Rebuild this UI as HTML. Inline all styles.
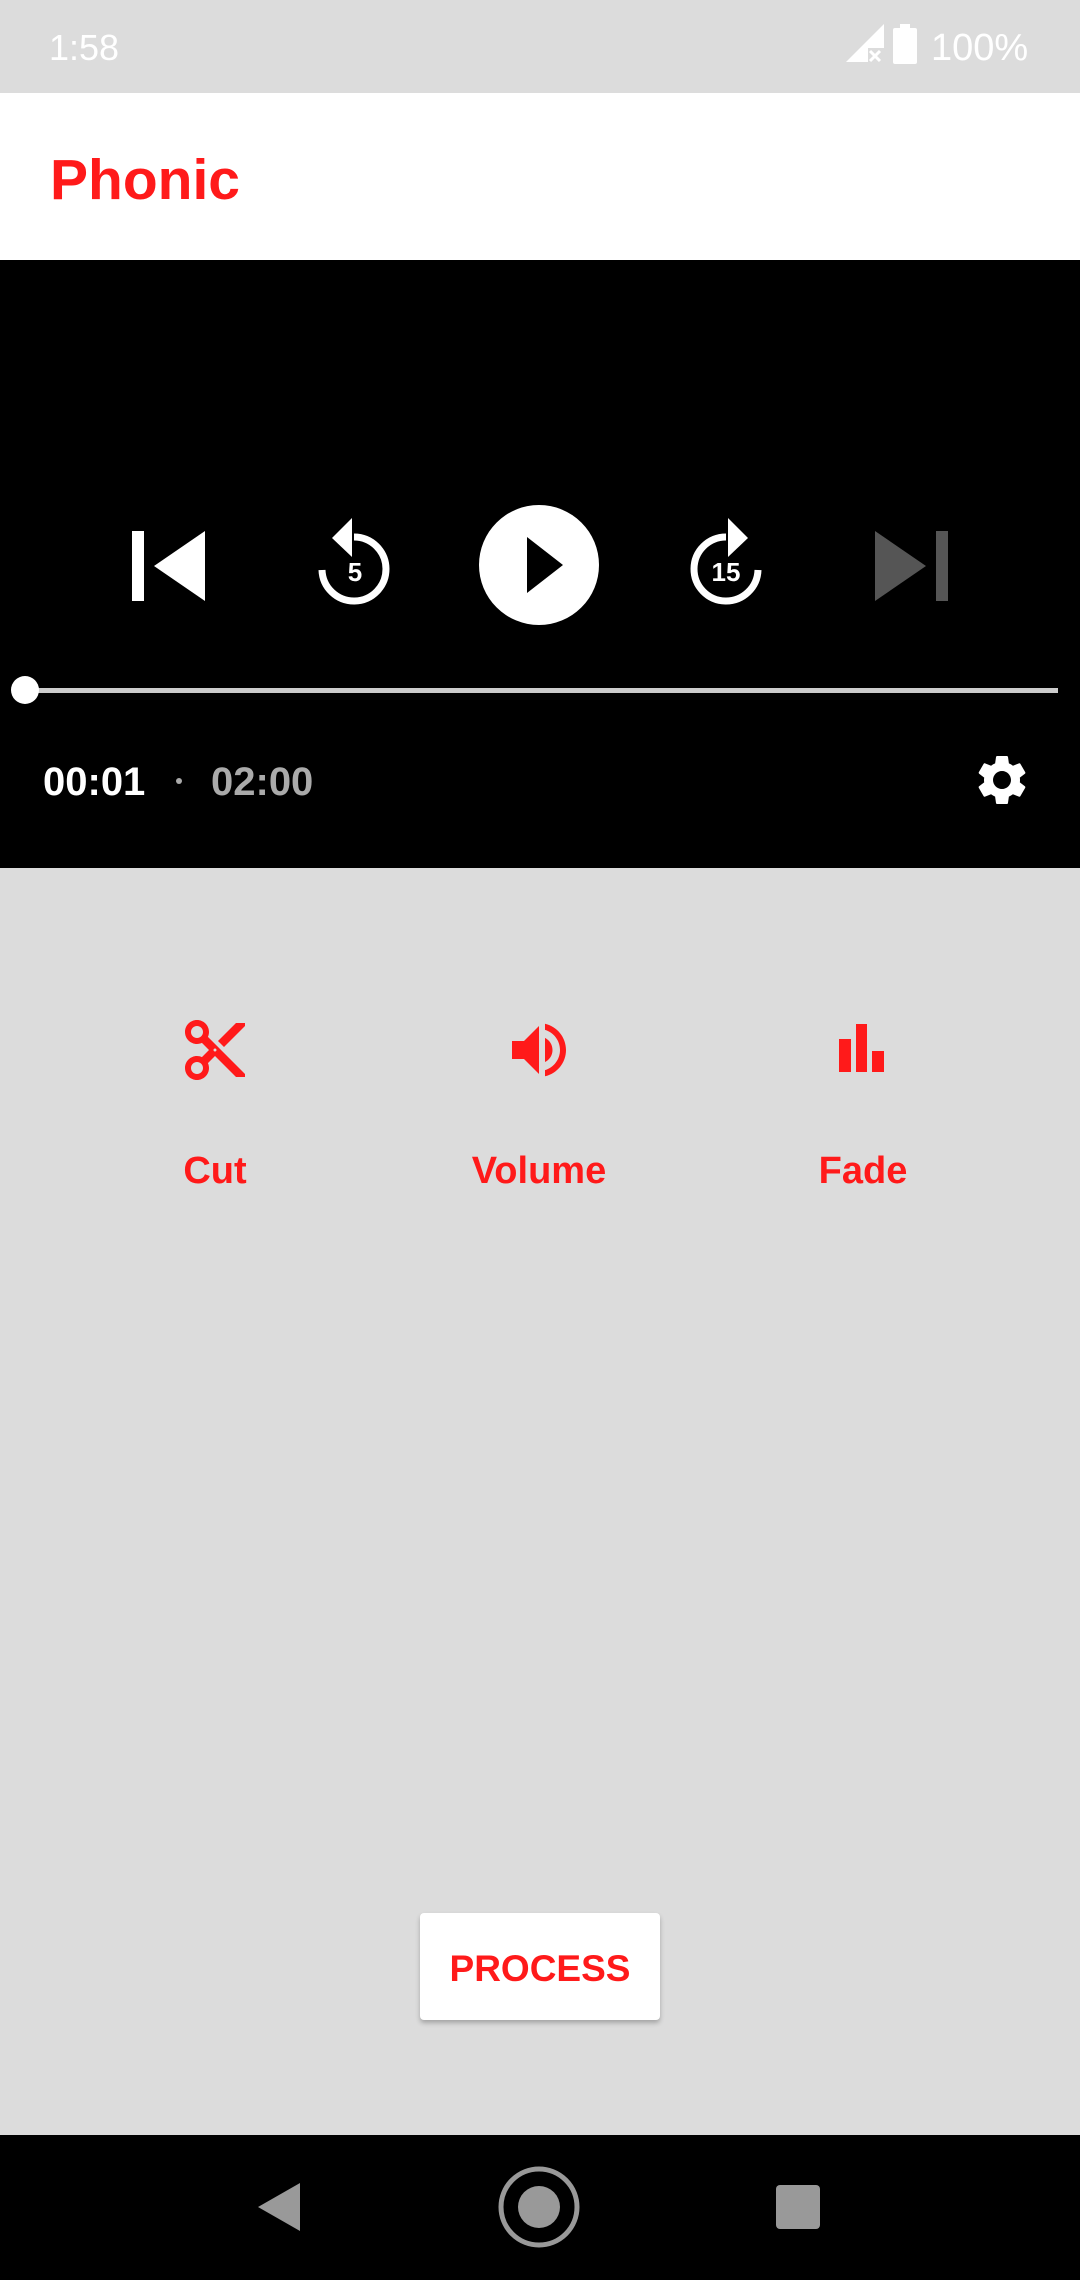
<!DOCTYPE html>
<html><head><meta charset="utf-8"><style>
*{margin:0;padding:0;box-sizing:border-box}
body{width:1080px;height:2280px;background:#dcdcdc;font-family:"Liberation Sans",sans-serif;position:relative;overflow:hidden}
.abs{position:absolute}
</style></head><body>
<div class="abs" style="left:0;top:0;width:1080px;height:93px;background:#dcdcdc"></div>
<div class="abs" style="left:49px;top:27px;font-size:36px;color:#fff">1:58</div>
<svg class="abs" style="left:846px;top:24px" width="42" height="40" viewBox="0 0 42 40"><path d="M0 38 L38 0 L38 24 L22 24 L22 38 Z" fill="#fff"/><path d="M24 27 L34 37 M34 27 L24 37" stroke="#fff" stroke-width="3"/></svg>
<svg class="abs" style="left:893px;top:24px" width="24" height="40" viewBox="0 0 24 40"><rect x="7" y="0" width="10" height="4" fill="#fff"/><rect x="0" y="4" width="24" height="36" rx="2" fill="#fff"/></svg>
<div class="abs" style="left:931px;top:27px;font-size:38px;color:#fff">100%</div>
<div class="abs" style="left:0;top:93px;width:1080px;height:167px;background:#fff"></div>
<div class="abs" style="left:50px;top:152px;font-size:57px;font-weight:bold;color:#ff1a1a;line-height:1">Phonic</div>
<div class="abs" style="left:0;top:260px;width:1080px;height:608px;background:#000"></div>
<svg class="abs" style="left:0;top:260px" width="1080" height="608" viewBox="0 260 1080 608">
 <rect x="132" y="531" width="12" height="70" fill="#fff"/>
 <path d="M205 531 L205 601 L154 566 Z" fill="#fff"/>
 <path d="M354 537 A32 32 0 1 1 322 570" fill="none" stroke="#fff" stroke-width="7"/>
 <path d="M352 518 L352 557 L332 538 Z" fill="#fff"/>
 <text x="355" y="581" font-size="26" font-weight="bold" fill="#fff" text-anchor="middle" font-family="Liberation Sans">5</text>
 <circle cx="539" cy="565" r="60" fill="#fff"/>
 <path d="M527 537 L527 593 L563 565 Z" fill="#000"/>
 <path d="M726 537 A32 32 0 1 0 758 570" fill="none" stroke="#fff" stroke-width="7"/>
 <path d="M728 518 L728 557 L748 538 Z" fill="#fff"/>
 <text x="726" y="581" font-size="26" font-weight="bold" fill="#fff" text-anchor="middle" font-family="Liberation Sans">15</text>
 <path d="M875 531 L875 601 L926 566 Z" fill="#555"/>
 <rect x="936" y="531" width="12" height="70" fill="#555"/>
 <rect x="25" y="688" width="1033" height="5" fill="#ccc"/>
 <circle cx="25" cy="690" r="14" fill="#fff"/>
 <circle cx="179" cy="781" r="3" fill="#aaa"/>
 <g transform="translate(972 750) scale(2.5)" fill="#fff"><path d="M19.14 12.94c.04-.3.06-.61.06-.94 0-.32-.02-.64-.07-.94l2.030-1.58a.49.49 0 0 0 .12-.61l-1.92-3.32a.488.488 0 0 0-.59-.22l-2.39.96c-.5-.38-1.030-.7-1.62-.94l-.36-2.54a.484.484 0 0 0-.48-.41h-3.84c-.24 0-.43.17-.47.41l-.36 2.54c-.59.24-1.13.57-1.62.94l-2.39-.96c-.22-.08-.47 0-.59.22L2.74 8.87c-.12.21-.08.47.12.61l2.030 1.58c-.05.3-.09.63-.09.94s.02.64.07.94l-2.030 1.58a.49.49 0 0 0-.12.61l1.92 3.32c.12.22.37.29.59.22l2.39-.96c.5.38 1.030.7 1.62.94l.36 2.54c.05.24.24.41.48.41h3.84c.24 0 .44-.17.47-.41l.36-2.54c.59-.24 1.13-.56 1.62-.94l2.39.96c.22.08.47 0 .59-.22l1.92-3.32c.12-.22.07-.47-.12-.61l-2.010-1.58zM12 15.6c-1.98 0-3.6-1.62-3.6-3.6s1.62-3.6 3.6-3.6 3.6 1.62 3.6 3.6-1.62 3.6-3.6 3.6z"/></g>
</svg>
<div class="abs" style="left:43px;top:760px;font-size:40px;font-weight:bold;color:#fff">00:01</div>
<div class="abs" style="left:211px;top:760px;font-size:40px;font-weight:bold;color:#aaa">02:00</div>
<svg class="abs" style="left:179px;top:1014px" width="72" height="72" viewBox="0 0 24 24" fill="#ff1a1a"><path d="M9.64 7.64c.23-.5.36-1.05.36-1.64 0-2.21-1.79-4-4-4S2 3.79 2 6s1.79 4 4 4c.59 0 1.14-.13 1.64-.36L10 12l-2.36 2.36C7.14 14.13 6.59 14 6 14c-2.21 0-4 1.79-4 4s1.790 4 4 4 4-1.79 4-4c0-.59-.13-1.14-.36-1.64L12 14l7 7h3v-1L9.64 7.64zM6 8c-1.1 0-2-.89-2-2s.9-2 2-2 2 .89 2 2-.9 2-2 2zm0 12c-1.1 0-2-.89-2-2s.9-2 2-2 2 .89 2 2-.9 2-2 2zm6-7.5c-.28 0-.5-.22-.5-.5s.22-.5.5-.5.5.22.5.5-.22.5-.5.5zM19 3l-6 6 2 2 7-7V3z"/></svg>
<svg class="abs" style="left:503px;top:1014px" width="72" height="72" viewBox="0 0 24 24" fill="#ff1a1a"><path d="M3 9v6h4l5 5V4L7 9H3zm13.5 3c0-1.77-1.020-3.29-2.5-4.030v8.05c1.48-.73 2.5-2.25 2.5-4.020zM14 3.23v2.06c2.89.86 5 3.54 5 6.71s-2.11 5.85-5 6.71v2.06c4.010-.91 7-4.49 7-8.77s-2.99-7.86-7-8.77z"/></svg>
<svg class="abs" style="left:820px;top:1014px" width="80" height="80" viewBox="0 0 80 80" fill="#ff1a1a"><rect x="19" y="25" width="12" height="33"/><rect x="36" y="10" width="11" height="48"/><rect x="52" y="37" width="12" height="21"/></svg>
<div class="abs" style="left:115px;top:1150px;width:200px;text-align:center;font-size:38px;font-weight:bold;color:#ff1a1a">Cut</div>
<div class="abs" style="left:439px;top:1150px;width:200px;text-align:center;font-size:38px;font-weight:bold;color:#ff1a1a">Volume</div>
<div class="abs" style="left:763px;top:1150px;width:200px;text-align:center;font-size:38px;font-weight:bold;color:#ff1a1a">Fade</div>
<div class="abs" style="left:420px;top:1913px;width:240px;height:107px;background:#fff;border-radius:4px;box-shadow:0 3px 5px rgba(0,0,0,.25);color:#ff1a1a;font-size:37px;font-weight:bold;text-align:center;line-height:112px">PROCESS</div>
<div class="abs" style="left:0;top:2135px;width:1080px;height:145px;background:#000"></div>
<svg class="abs" style="left:0;top:2135px" width="1080" height="145" viewBox="0 2135 1080 145">
 <path d="M300 2183 L300 2231 L258 2207 Z" fill="#999"/>
 <circle cx="539" cy="2207" r="38" fill="none" stroke="#999" stroke-width="5"/>
 <circle cx="539" cy="2207" r="21" fill="#999"/>
 <rect x="776" y="2185" width="44" height="44" rx="4" fill="#999"/>
</svg>
</body></html>
